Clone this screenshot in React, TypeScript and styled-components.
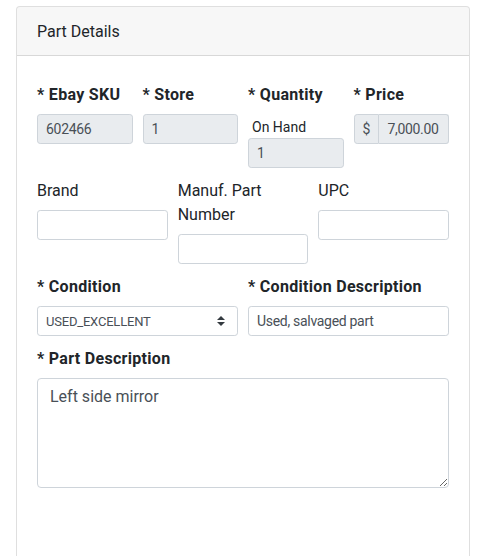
import styled, { createGlobalStyle } from "styled-components";

const GlobalStyle = createGlobalStyle`
  * { box-sizing: border-box; }
  body {
    margin: 0;
    background: #fff;
    color: #212529;
    font-family: Roboto, "Helvetica Neue", Arial, sans-serif;
    font-size: 16px;
    line-height: 1.5;
  }
`;

const Card = styled.section`
  margin: 6px 7px 0 16px;
  min-height: 600px;
  background: #fff;
  border: 1px solid rgba(0, 0, 0, 0.125);
  border-radius: 4px;
`;

const CardHeader = styled.header`
  padding: 13px 20px 11px;
  background: rgba(0, 0, 0, 0.03);
  border-bottom: 1px solid rgba(0, 0, 0, 0.125);
  border-radius: 3px 3px 0 0;
`;

const CardBody = styled.div`
  padding: 26px 20px 20px;
`;

const FormRow = styled.div<{ $cols: number }>`
  display: grid;
  grid-template-columns: repeat(${(p) => p.$cols}, minmax(0, 1fr));
  column-gap: 10px;
  align-items: start;
  margin-bottom: 10px;
`;

const Field = styled.div`
  display: flex;
  flex-direction: column;
  min-width: 0;
`;

const Label = styled.label<{ $required?: boolean }>`
  padding-top: 1px;
  margin-bottom: 7px;
  line-height: 24px;
  font-weight: ${(p) => (p.$required ? 700 : 400)};
  letter-spacing: ${(p) => (p.$required ? "0.3px" : "0")};
`;

const SubLabel = styled.span`
  padding: 1px 0 0 4px;
  margin-bottom: -1px;
  font-size: 14px;
  line-height: 24px;
`;

const Input = styled.input`
  width: 100%;
  height: 30px;
  padding: 4px 8px;
  font-family: inherit;
  font-size: 14px;
  letter-spacing: -0.3px;
  color: #495057;
  background: #fff;
  border: 1px solid #ced4da;
  border-radius: 3.2px;
  outline: none;

  &[readonly] {
    background: #e9ecef;
  }
`;

const InputGroup = styled.div`
  display: flex;
  height: 30px;
`;

const Addon = styled.span`
  display: flex;
  align-items: center;
  padding: 0 8px;
  font-size: 14px;
  color: #495057;
  background: #e9ecef;
  border: 1px solid #ced4da;
  border-radius: 3.2px 0 0 3.2px;
`;

const GroupInput = styled(Input)`
  flex: 1;
  min-width: 0;
  padding-right: 6px;
  border-left: 0;
  border-radius: 0 3.2px 3.2px 0;
`;

const SelectWrap = styled.div`
  position: relative;
`;

const Select = styled.select`
  width: 100%;
  height: 30px;
  padding: 4px 28px 4px 8px;
  appearance: none;
  font-family: inherit;
  font-size: 13px;
  letter-spacing: -0.2px;
  color: #495057;
  background: #fff;
  border: 1px solid #ced4da;
  border-radius: 3.2px;
  outline: none;
`;

const SelectArrows = styled.svg`
  position: absolute;
  top: 50%;
  right: 13px;
  width: 8px;
  height: 10px;
  transform: translateY(-50%);
  pointer-events: none;
`;

const TextArea = styled.textarea`
  display: block;
  width: 100%;
  height: 110px;
  padding: 6px 12px;
  font-family: inherit;
  font-size: 16px;
  line-height: 1.5;
  color: #495057;
  background: #fff;
  border: 1px solid #ced4da;
  border-radius: 4px;
  outline: none;
  resize: vertical;
`;

export default function App() {
  return (
    <>
      <GlobalStyle />
      <Card>
        <CardHeader>Part Details</CardHeader>
        <CardBody>
          <FormRow $cols={4}>
            <Field>
              <Label $required>* Ebay SKU</Label>
              <Input readOnly value="602466" />
            </Field>
            <Field>
              <Label $required>* Store</Label>
              <Input readOnly value="1" />
            </Field>
            <Field>
              <Label $required>* Quantity</Label>
              <SubLabel>On Hand</SubLabel>
              <Input readOnly value="1" />
            </Field>
            <Field>
              <Label $required>* Price</Label>
              <InputGroup>
                <Addon>$</Addon>
                <GroupInput readOnly value="7,000.00" />
              </InputGroup>
            </Field>
          </FormRow>

          <FormRow $cols={3}>
            <Field>
              <Label>Brand</Label>
              <Input defaultValue="" />
            </Field>
            <Field>
              <Label>Manuf. Part Number</Label>
              <Input defaultValue="" />
            </Field>
            <Field>
              <Label>UPC</Label>
              <Input defaultValue="" />
            </Field>
          </FormRow>

          <FormRow $cols={2}>
            <Field>
              <Label $required>* Condition</Label>
              <SelectWrap>
                <Select defaultValue="USED_EXCELLENT">
                  <option>NEW</option>
                  <option>USED_EXCELLENT</option>
                  <option>USED_GOOD</option>
                  <option>USED_FAIR</option>
                </Select>
                <SelectArrows viewBox="0 0 4 5">
                  <path fill="#343a40" d="M2 0L0 2h4zm0 5L0 3h4z" />
                </SelectArrows>
              </SelectWrap>
            </Field>
            <Field>
              <Label $required>* Condition Description</Label>
              <Input defaultValue="Used, salvaged part" />
            </Field>
          </FormRow>

          <FormRow $cols={1}>
            <Field>
              <Label $required>* Part Description</Label>
              <TextArea defaultValue="Left side mirror" />
            </Field>
          </FormRow>
        </CardBody>
      </Card>
    </>
  );
}
